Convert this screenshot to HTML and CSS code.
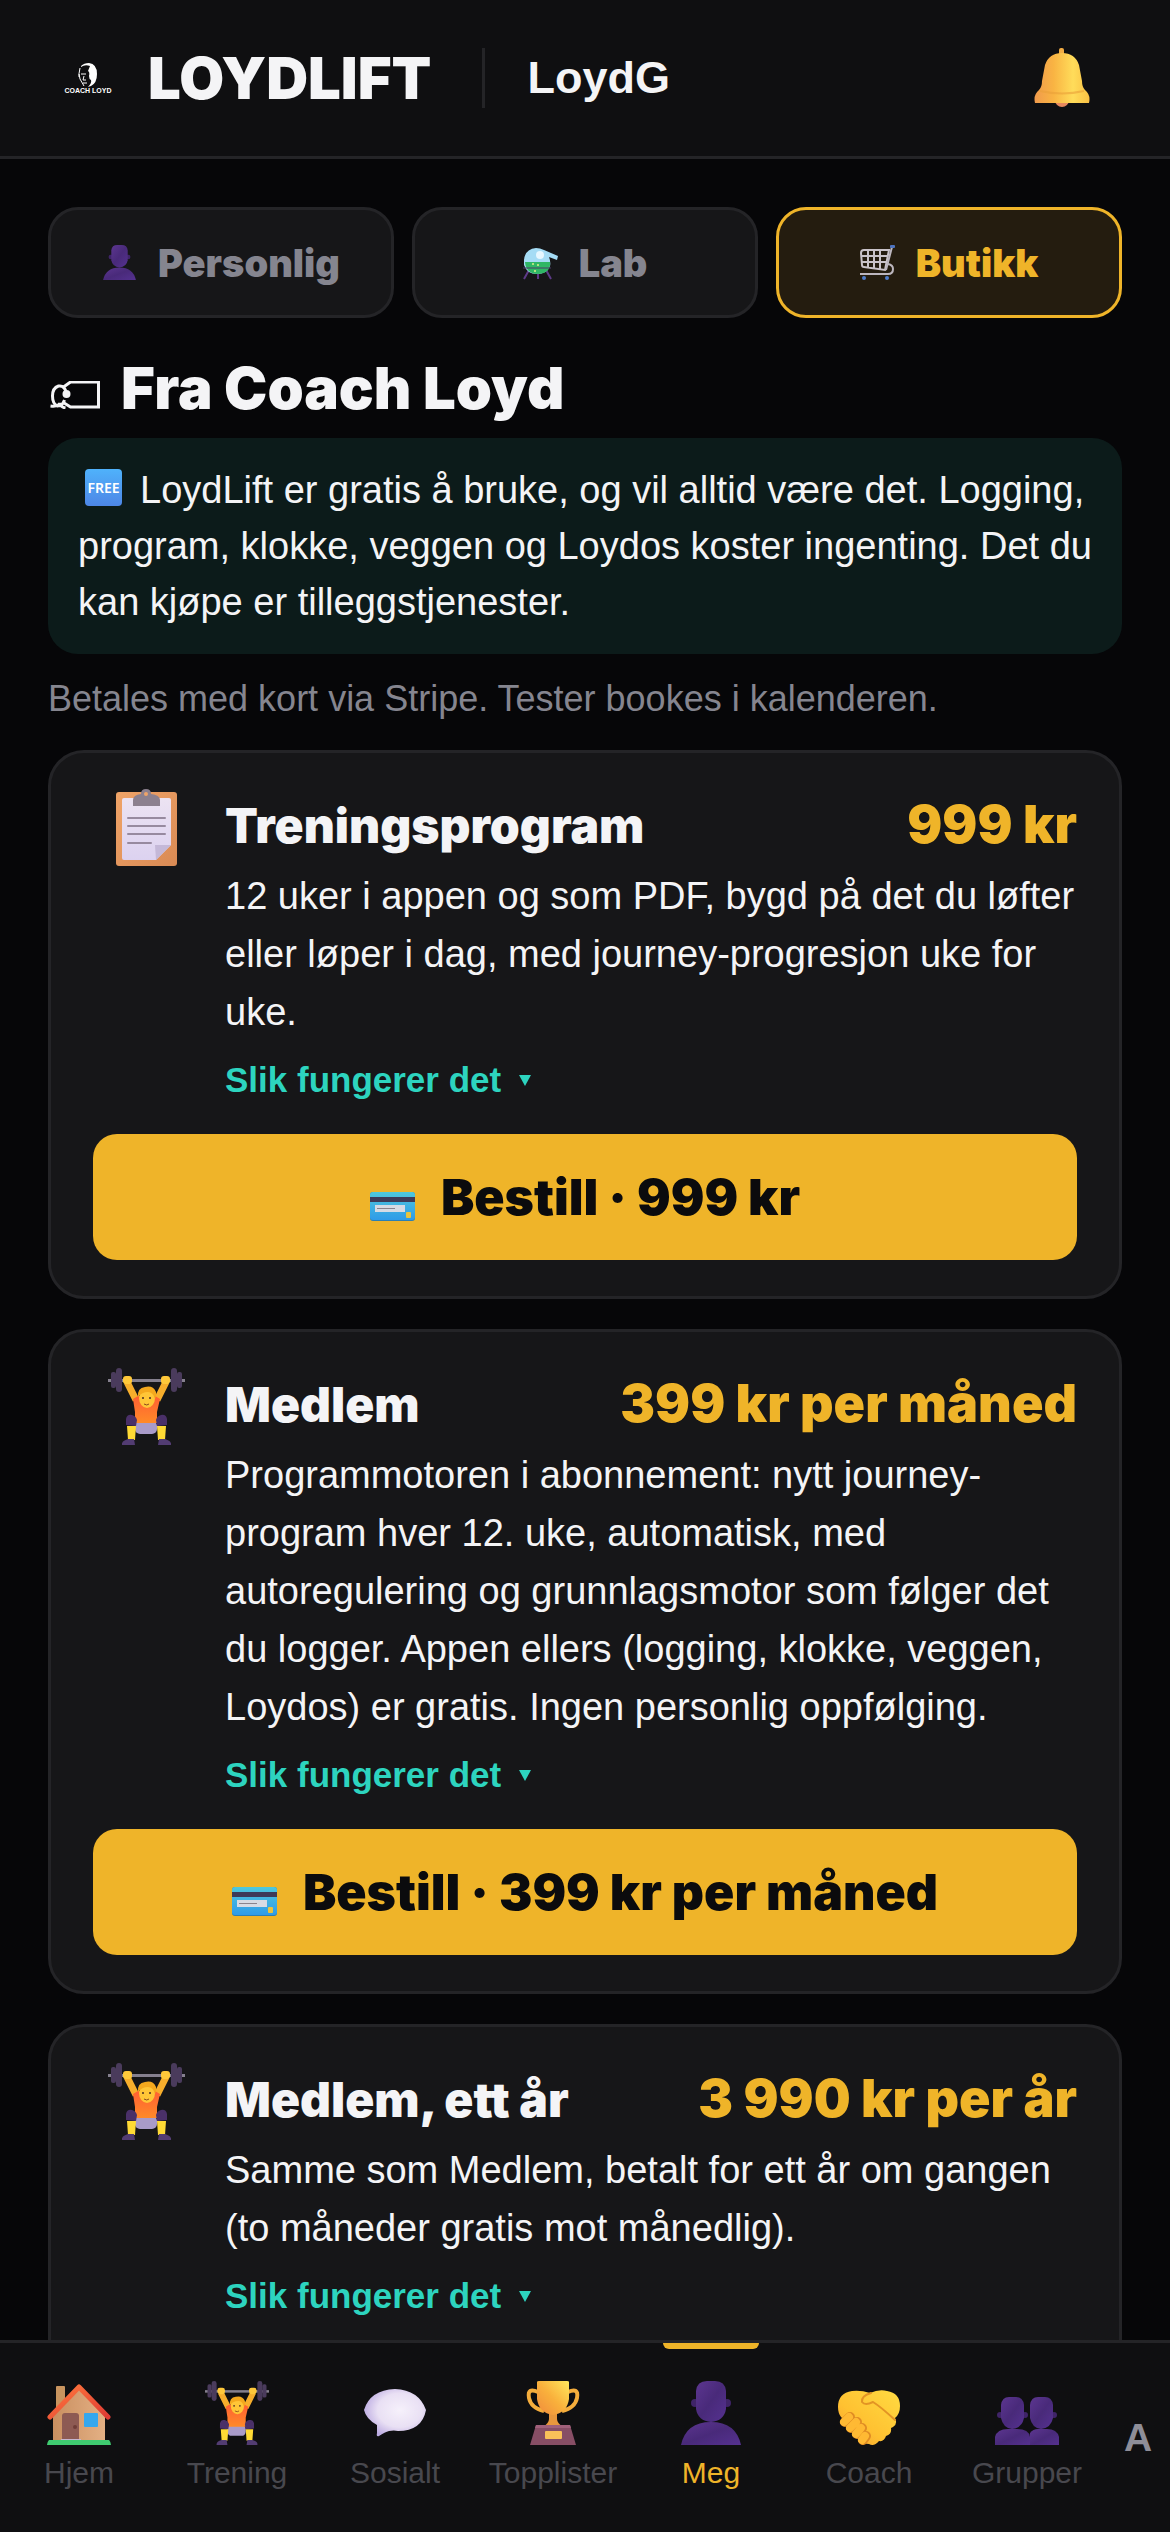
FILE: index.html
```html
<!DOCTYPE html>
<html lang="no">
<head>
<meta charset="utf-8">
<meta name="viewport" content="width=device-width, initial-scale=1">
<title>LoydLift – Butikk</title>
<link rel="stylesheet" href="styles.css">
</head>
<body>
<svg class="sprite" aria-hidden="true">
  <defs>
    <linearGradient id="gold" x1="0" x2="1" y1="0" y2="0"><stop offset="0" stop-color="#f09a4c"/><stop offset=".35" stop-color="#f9b443"/><stop offset=".7" stop-color="#ffdc5a"/><stop offset="1" stop-color="#f9c044"/></linearGradient>
    <linearGradient id="cup" x1="0" x2="1" y1="1" y2="0"><stop offset="0" stop-color="#f08a3c"/><stop offset=".5" stop-color="#f9b13c"/><stop offset="1" stop-color="#ffe85c"/></linearGradient>
    <linearGradient id="shirt" x1="0" x2="0" y1="0" y2="1"><stop offset="0" stop-color="#ff5f33"/><stop offset="1" stop-color="#ff8a28"/></linearGradient>
    <linearGradient id="violet" x1="0" x2="1" y1="0" y2="1"><stop offset="0" stop-color="#5c3690"/><stop offset=".5" stop-color="#492a7a"/><stop offset="1" stop-color="#553190"/></linearGradient>
    <linearGradient id="wall" x1="0" x2="1"><stop offset="0" stop-color="#c98f60"/><stop offset="1" stop-color="#e4b084"/></linearGradient>
    <linearGradient id="roof" x1="0" x2="1" y1="0" y2="1"><stop offset="0" stop-color="#ff7a3c"/><stop offset="1" stop-color="#e03a34"/></linearGradient>
    <radialGradient id="cloud" cx=".58" cy=".45" r=".6"><stop offset="0" stop-color="#f6f1fb"/><stop offset=".6" stop-color="#e9e0f4"/><stop offset="1" stop-color="#bcabe2"/></radialGradient>
    <linearGradient id="hand" x1="0" x2="1" y1="1" y2="0"><stop offset="0" stop-color="#f59a2e"/><stop offset=".4" stop-color="#ffc131"/><stop offset="1" stop-color="#ffdb42"/></linearGradient>
    <linearGradient id="card" x1="0" x2="0" y1="0" y2="1"><stop offset="0" stop-color="#4fc8dc"/><stop offset="1" stop-color="#2f9be8"/></linearGradient>
    <linearGradient id="board" x1="0" x2="1" y1="0" y2="1"><stop offset="0" stop-color="#f0a468"/><stop offset="1" stop-color="#d98a54"/></linearGradient>
    <linearGradient id="paper" x1="0" x2="0" y1="0" y2="1"><stop offset="0" stop-color="#ece3f2"/><stop offset="1" stop-color="#dcd2f0"/></linearGradient>
  </defs>

  <symbol id="i-lifter" viewBox="0 0 77 77">
    <rect x="0" y="11" width="77" height="3" fill="#85808e"/>
    <g fill="#4a3b5c"><rect x="3" y="4" width="5" height="16" rx="2"/><rect x="8" y="0" width="6" height="24" rx="3"/><rect x="63" y="0" width="6" height="24" rx="3"/><rect x="69" y="4" width="5" height="16" rx="2"/></g>
    <path d="M19 14l9 18M58 14l-9 18" stroke="#f7ae2c" stroke-width="7"/>
    <rect x="15" y="8" width="9" height="8" rx="3" fill="#ffc83a"/><rect x="53" y="8" width="9" height="8" rx="3" fill="#ffc83a"/>
    <rect x="27" y="53" width="22" height="13" rx="5" fill="#a99bc9"/>
    <path d="M25 31l5-3h17l5 3-3 13v11H27V44z" fill="url(#shirt)"/>
    <path d="M18 57V51q1-5 6-4 4 1 5 5l-1 6zM59 57V51q-1-5-6-4-4 1-5 5l1 6z" fill="#4a3068"/>
    <path d="M19 58h9l-1 14h-7zM58 58h-9l1 14h7z" fill="#ffda35"/>
    <path d="M14 77q-1-4 6-6h6l1 6zM63 77q1-4-6-6h-6l-1 6z" fill="#523c72"/>
    <ellipse cx="39" cy="30" rx="8" ry="10" fill="#ffc637"/>
    <path d="M30 29q-1-9 7-10 8-2 11 5 1 3-1 7-2-7-7-7-6 0-10 5z" fill="#f4a91e"/>
    <circle cx="35" cy="30" r="1" fill="#4a2c22"/><circle cx="42" cy="30" r="1" fill="#4a2c22"/>
    <path d="M36 36q3 2 5 0" stroke="#8a4a1c" fill="none"/>
  </symbol>

  <symbol id="i-person" viewBox="0 0 64 64">
    <circle cx="16" cy="22" r="4" fill="#3f2468"/><circle cx="48" cy="22" r="4" fill="#3f2468"/>
    <path d="M17 10Q18 0 28 0h8q10 0 11 10v18q-2 12-15 13Q19 40 17 28z" fill="url(#violet)"/>
    <path d="M2 64Q7 41 32 41T62 64z" fill="url(#violet)"/>
  </symbol>

  <symbol id="i-group" viewBox="0 0 64 64">
    <circle cx="5" cy="34" r="3" fill="#3f2468"/><circle cx="30" cy="34" r="3" fill="#3f2468"/>
    <path d="M6 24q1-8 8-8h7q7 0 8 8v13q-2 10-12 11Q8 47 6 37z" fill="url(#violet)"/>
    <path d="M0 65V56q2-8 13-8h9q12 0 13 8v9z" fill="url(#violet)"/>
    <circle cx="59" cy="34" r="3" fill="#3f2468"/>
    <path d="M35 24q1-8 8-8h7q7 0 8 8v13q-2 10-12 11-9-1-11-11z" fill="url(#violet)"/>
    <path d="M35 65V52q3-4 8-4h9q10 0 12 8v9z" fill="url(#violet)"/>
  </symbol>

  <symbol id="i-house" viewBox="0 0 64 64">
    <rect x="9" y="5" width="9" height="30" rx="1" fill="#c8945f"/>
    <path d="M6 33L32 8l26 25v27H6z" fill="url(#wall)"/>
    <path d="M15 60V35q0-3 3-3h11q3 0 3 3v25z" fill="#8d5a53"/><circle cx="28" cy="46" r="2" fill="#6f3d38"/>
    <rect x="14" y="58" width="20" height="2" fill="#c5b6cf"/>
    <rect x="37" y="32" width="14" height="14" rx="1" fill="#35a7ee"/>
    <path d="M3 36L32 6l29 30" fill="none" stroke="url(#roof)" stroke-width="5" stroke-linecap="round" stroke-linejoin="round"/>
    <path d="M2 59h60q2 2 2 5H0q0-3 2-5z" fill="#3fcb70"/>
  </symbol>

  <symbol id="i-bubble" viewBox="0 0 64 64">
    <path d="M1 29Q7 9 32 8q24 1 31 21-4 21-28 21-4-1-9 0-4 1-10 5-3 1-2-3v-8Q3 38 1 29z" fill="url(#cloud)"/>
  </symbol>

  <symbol id="i-trophy" viewBox="0 0 64 64">
    <path d="M17 11Q6 6 8 17q2 10 15 13M47 11q11-5 9 6-2 10-15 13" fill="none" stroke="#f5ad3c" stroke-width="4"/>
    <path d="M28 30h8v8q0 4 6 8H22q6-4 6-8z" fill="#e9973c"/>
    <path d="M16 1q0-1 2-1h28q2 0 2 1v17Q46 32 32 34 18 32 16 18z" fill="url(#cup)"/>
    <path d="M15 44h34l6 20H9z" fill="#874e65"/><path d="M15 44h34l1 3H14z" fill="#a0607a"/>
    <rect x="24" y="50" width="17" height="8" rx="1" fill="#f9c059"/>
  </symbol>

  <symbol id="i-shake" viewBox="0 0 64 64">
    <path d="M1 26Q1 12 15 10q9-1 18 2 9-4 17-2 13 2 13 15 0 8-5 12 3 6-2 9-2 1-2 1 1 6-5 8-2 6-7 5-5 6-10 3-6 0-6-6L4 36q-3-4-3-10z" fill="url(#hand)"/>
    <path d="M36 21q8 5 22 18M34 12q-10 3-9 9 3 4 11 0" fill="none" stroke="#e39424" stroke-width="2" stroke-linecap="round"/>
    <g stroke="#e08c24" stroke-width="10" stroke-linecap="round"><path d="M8 41l5-5M14 47l6-6M20 53l5-6M26 59l3-4"/></g>
    <g stroke="#ffb933" stroke-width="8" stroke-linecap="round"><path d="M7 41l5-5M13 47l6-6M19 53l5-6M25 59l3-4"/></g>
  </symbol>

  <symbol id="i-clip" viewBox="0 0 77 77">
    <rect x="8" y="3" width="61" height="74" rx="3" fill="url(#board)"/>
    <path d="M14 11q0-2 2-2h45q2 0 2 2v45L48 71H16q-2 0-2-2z" fill="url(#paper)"/>
    <path d="M47 56h16L48 71z" fill="#c4b8d8"/>
    <path d="M25 17v-6q0-5 8-6 0-5 5-5t5 5q9 1 9 6v6z" fill="#8c808e"/><circle cx="38" cy="5" r="2" fill="#f0a468"/>
    <path d="M20 29h37M20 37h37M20 45h37M20 54h23" stroke="#978a9f" stroke-width="2" stroke-linecap="round"/>
  </symbol>

  <symbol id="i-bell" viewBox="0 0 56 60">
    <circle cx="28" cy="52" r="7" fill="#e8895e"/><rect x="25" y="0" width="5" height="9" rx="2" fill="#f2ad45"/>
    <path d="M1 55Q-1 47 5 42q3-3 3-9l3-16Q15 5 28 5t17 12l3 16q0 6 3 9 6 5 4 13z" fill="url(#gold)"/>
    <path d="M6 43q22 5 44 0" fill="none" stroke="#e9a038" stroke-width="2" opacity=".6"/>
  </symbol>

  <symbol id="i-card" viewBox="0 0 45 29">
    <rect width="45" height="29" rx="3" fill="#2a7fb4"/><rect width="45" height="28" rx="3" fill="url(#card)"/>
    <rect y="5" width="45" height="5" fill="#3e3a58"/><rect x="5" y="13" width="30" height="7" fill="#d7dbe4"/>
    <rect x="7" y="16" width="18" height="1" fill="#89838d"/><rect x="36" y="20" width="5" height="6" rx="1" fill="#e9c43e"/>
  </symbol>

  <symbol id="i-lab" viewBox="0 0 35 35">
    <path d="M6 25L1 34M23 25l5 9M15 27v7" stroke="#5d3a87" stroke-width="2"/>
    <path d="M1 15Q2 4 13 3q4 0 8 2l14 6-1 4-8-3q2 5 1 9-3 8-13 8T1 20z" fill="#a5dcf5"/>
    <path d="M2 17h25q1 11-12 12Q3 29 2 17z" fill="#2fb765"/><path d="M0 23h28" stroke="#4a3b6a" stroke-width="1"/>
    <circle cx="10" cy="19" r="1" fill="#d8f28a"/><circle cx="15" cy="20" r="1" fill="#d8f28a"/><circle cx="12" cy="26" r="1" fill="#d8f28a"/><ellipse cx="17" cy="10" rx="4" ry="4" fill="#e6f7ff"/>
  </symbol>

  <symbol id="i-cart" viewBox="0 0 35 35">
    <path d="M1 8q0-3 3-3h25l-4 20L4 22q-2 0-2-2zM1 11h27M2 17h25M8 5v17M14 5v18M20 5v19" fill="none" stroke="#c9c3c9" stroke-width="2"/>
    <path d="M32 2l-6 23M28 19q5 1 5 5 0 5-5 5H0" fill="none" stroke="#bcb6be" stroke-width="2"/>
    <rect x="30" y="0" width="5" height="3" rx="1" fill="#4e74c0"/><circle cx="4" cy="33" r="2" fill="#4e7ccc"/><circle cx="27" cy="33" r="2" fill="#4e7ccc"/>
  </symbol>

  <symbol id="i-tag" viewBox="0 0 50 28">
    <path d="M13 6l7-5h28v25H20l-8-5" fill="none" stroke="currentColor" stroke-width="3"/>
    <circle cx="16" cy="13" r="4" fill="currentColor"/>
    <path d="M16 12Q14 4 8 5 2 7 2 15t5 10q5 0 7-6M0 25q8 1 9-3 1 4 6 5" fill="none" stroke="currentColor" stroke-width="3"/>
  </symbol>
</svg>

<div class="app">
  <header class="top">
    <svg class="logo" viewBox="0 0 48 30" role="img" aria-label="Coach Loyd">
      <path d="M17 3q3-3 8-3 8 1 8 11 0 9-6 12l-3 1q4-4 3-7-2-1-2-4 1-4-1-5l2-5q-5-2-9 1z" fill="#fff"/>
      <path d="M16 5q-2 6 0 11l4 7M15 11v3M17 11h5M20 13l-1 4h3M19 20h4" fill="none" stroke="#fff" stroke-width="1"/>
      <text class="logo-text" x="24" y="30" text-anchor="middle">COACH LOYD</text>
    </svg>
    <span class="brand">LOYDLIFT</span>
    <span class="user">LoydG</span>
    <button class="bell" type="button" aria-label="Varsler"><svg class="bell-icon"><use href="#i-bell"/></svg></button>
  </header>

  <main class="content">
    <div class="tabs">
      <button class="tab" type="button"><svg class="tab-icon"><use href="#i-person"/></svg>Personlig</button>
      <button class="tab" type="button"><svg class="tab-icon"><use href="#i-lab"/></svg>Lab</button>
      <button class="tab tab-active" type="button"><svg class="tab-icon"><use href="#i-cart"/></svg>Butikk</button>
    </div>

    <h1 class="title"><svg class="title-icon"><use href="#i-tag"/></svg>Fra Coach Loyd</h1>

    <p class="notice"><span class="free">FREE</span>LoydLift er gratis å bruke, og vil alltid være det. Logging, program, klokke, veggen og Loydos koster ingenting. Det du kan kjøpe er tilleggstjenester.</p>

    <p class="hint">Betales med kort via Stripe. Tester bookes i kalenderen.</p>

    <div class="cards">
      <article class="card">
        <div class="card-main">
          <svg class="card-icon"><use href="#i-clip"/></svg>
          <div class="card-body">
            <div class="card-head"><h2 class="name">Treningsprogram</h2><span class="price">999 kr</span></div>
            <p class="desc">12 uker i appen og som PDF, bygd på det du løfter eller løper i dag, med journey-progresjon uke for uke.</p>
            <button class="more" type="button" aria-expanded="false">Slik fungerer det<span class="caret"></span></button>
          </div>
        </div>
        <button class="order" type="button"><svg class="order-icon"><use href="#i-card"/></svg>Bestill · 999 kr</button>
      </article>

      <article class="card">
        <div class="card-main">
          <svg class="card-icon"><use href="#i-lifter"/></svg>
          <div class="card-body">
            <div class="card-head"><h2 class="name">Medlem</h2><span class="price">399 kr per måned</span></div>
            <p class="desc">Programmotoren i abonnement: nytt journey-program hver 12. uke, automatisk, med autoregulering og grunnlagsmotor som følger det du logger. Appen ellers (logging, klokke, veggen, Loydos) er gratis. Ingen personlig oppfølging.</p>
            <button class="more" type="button" aria-expanded="false">Slik fungerer det<span class="caret"></span></button>
          </div>
        </div>
        <button class="order" type="button"><svg class="order-icon"><use href="#i-card"/></svg>Bestill · 399 kr per måned</button>
      </article>

      <article class="card">
        <div class="card-main">
          <svg class="card-icon"><use href="#i-lifter"/></svg>
          <div class="card-body">
            <div class="card-head"><h2 class="name">Medlem, ett år</h2><span class="price">3 990 kr per år</span></div>
            <p class="desc">Samme som Medlem, betalt for ett år om gangen (to måneder gratis mot månedlig).</p>
            <button class="more more-last" type="button" aria-expanded="false">Slik fungerer det<span class="caret"></span></button>
          </div>
        </div>
      </article>
    </div>
  </main>

  <nav class="nav">
    <a class="nav-item" href="#hjem"><svg class="nav-icon"><use href="#i-house"/></svg>Hjem</a>
    <a class="nav-item" href="#trening"><svg class="nav-icon"><use href="#i-lifter"/></svg>Trening</a>
    <a class="nav-item" href="#sosialt"><svg class="nav-icon"><use href="#i-bubble"/></svg>Sosialt</a>
    <a class="nav-item" href="#topplister"><svg class="nav-icon"><use href="#i-trophy"/></svg>Topplister</a>
    <a class="nav-item nav-active" href="#meg"><svg class="nav-icon"><use href="#i-person"/></svg>Meg</a>
    <a class="nav-item" href="#coach"><svg class="nav-icon"><use href="#i-shake"/></svg>Coach</a>
    <a class="nav-item" href="#grupper"><svg class="nav-icon"><use href="#i-group"/></svg>Grupper</a>
    <button class="text-size" type="button" aria-label="Tekststørrelse">A</button>
  </nav>
</div>
</body>
</html>
```
FILE: styles.css
```css
:root {
  --bg: #060608;
  --bar: #0f0f11;
  --surface: #161618;
  --line: #242427;
  --text: #f4f4f6;
  --muted: #85858f;
  --gold: #efb429;
  --teal: #2dd4bf;
  --sans: "Liberation Sans", Arial, sans-serif;
  --display: "Inter", "Arial Black", sans-serif;
}

* { box-sizing: border-box; }

body {
  margin: 0;
  background: var(--bg);
  color: var(--text);
  font-family: var(--sans);
}

h1, h2, p { margin: 0; }
button { border: 0; padding: 0; background: none; color: inherit; font-family: inherit; cursor: pointer; }
svg { flex: none; }
.sprite { position: absolute; width: 0; height: 0; }

.app { display: flex; flex-direction: column; height: 100vh; }

/* Header */
.top {
  display: flex;
  align-items: center;
  min-height: 159px;
  padding: 0 80px 0 64px;
  background: var(--bar);
  border-bottom: 3px solid var(--line);
}
.logo { width: 48px; height: 30px; margin-right: 36px; }
.logo-text { font: bold 7px var(--sans); fill: #fff; }
.brand { font: 900 58px/60px var(--display); }
.user {
  margin-left: 51px;
  padding-left: 42px;
  border-left: 3px solid var(--line);
  font-size: 45px;
  font-weight: bold;
  line-height: 60px;
}
.bell { margin-left: auto; height: 60px; }
.bell-icon { display: block; width: 56px; height: 60px; }

/* Scrolling area */
.content {
  flex: 1;
  min-height: 0;
  overflow-y: auto;
  scrollbar-width: none;
  padding: 48px 48px 0;
}

.tabs { display: grid; grid-template-columns: repeat(3, 1fr); gap: 18px; }
.tab {
  display: flex;
  align-items: center;
  justify-content: center;
  gap: 21px;
  height: 111px;
  border: 3px solid var(--line);
  border-radius: 30px;
  background: var(--surface);
  color: var(--muted);
  font: 900 38px/48px var(--display);
}
.tab-active { border-color: var(--gold); background: #241c0f; color: var(--gold); }
.tab-icon { width: 35px; height: 35px; }

.title {
  display: flex;
  align-items: center;
  gap: 20px;
  margin: 34px 0 14px;
  font: 900 58px/72px var(--display);
}
.title-icon { width: 51px; height: 28px; margin: 14px 0 0 2px; }

.notice {
  padding: 24px 30px;
  border-radius: 30px;
  background: #0c1b1a;
  font-size: 38px;
  line-height: 56px;
}
.free {
  float: left;
  width: 37px;
  height: 37px;
  margin: 7px 18px 0 7px;
  border-radius: 4px;
  background: linear-gradient(#4fb2fb, #4d86e6);
  color: #fff;
  font: 600 14px/37px "Noto Sans", sans-serif;
  text-align: center;
}

.hint { margin: 18px 0 24px; color: var(--muted); font-size: 36px; line-height: 54px; }

/* Product cards */
.cards { display: flex; flex-direction: column; gap: 30px; }
.card {
  padding: 36px 42px;
  border: 3px solid var(--line);
  border-radius: 36px;
  background: var(--surface);
}
.card-main { display: flex; gap: 26px; }
.card-icon { width: 77px; height: 77px; margin: 0 14px 0 15px; }
.card-body { flex: 1; min-width: 0; }
.card-head { display: flex; align-items: baseline; justify-content: space-between; }
.name { font: 900 48px/72px var(--display); }
.price { font: 900 52px/72px var(--display); color: var(--gold); white-space: nowrap; }
.desc { margin-top: 5px; font-size: 38px; line-height: 58px; }
.more {
  display: flex;
  align-items: center;
  gap: 18px;
  margin-top: 15px;
  color: var(--teal);
  font-size: 35px;
  font-weight: bold;
  line-height: 48px;
}
.more-last { margin-bottom: 30px; }
.caret { border: 6px solid transparent; border-top: 11px solid var(--teal); border-bottom: 0; }
.order {
  display: flex;
  align-items: center;
  justify-content: center;
  gap: 26px;
  width: 100%;
  height: 126px;
  margin-top: 30px;
  border-radius: 24px;
  background: var(--gold);
  color: #0b0b0d;
  font: 900 50px/60px var(--display);
}
.order-icon { width: 45px; height: 29px; margin-top: 18px; }

/* Bottom navigation */
.nav {
  display: grid;
  grid-template-columns: repeat(7, 1fr) 64px;
  background: var(--bar);
  border-top: 3px solid var(--line);
  min-height: 192px;
}
.nav-item {
  position: relative;
  display: flex;
  flex-direction: column;
  align-items: center;
  padding-top: 38px;
  gap: 10px;
  color: #48484e;
  font-size: 30px;
  line-height: 36px;
  text-decoration: none;
}
.nav-icon { width: 64px; height: 64px; }
.nav-active { color: var(--gold); }
.nav-active::before {
  content: "";
  position: absolute;
  top: 0;
  width: 96px;
  height: 6px;
  border-radius: 0 0 6px 6px;
  background: var(--gold);
}
.text-size { color: #8e8e98; font-size: 39px; font-weight: bold; }
```
